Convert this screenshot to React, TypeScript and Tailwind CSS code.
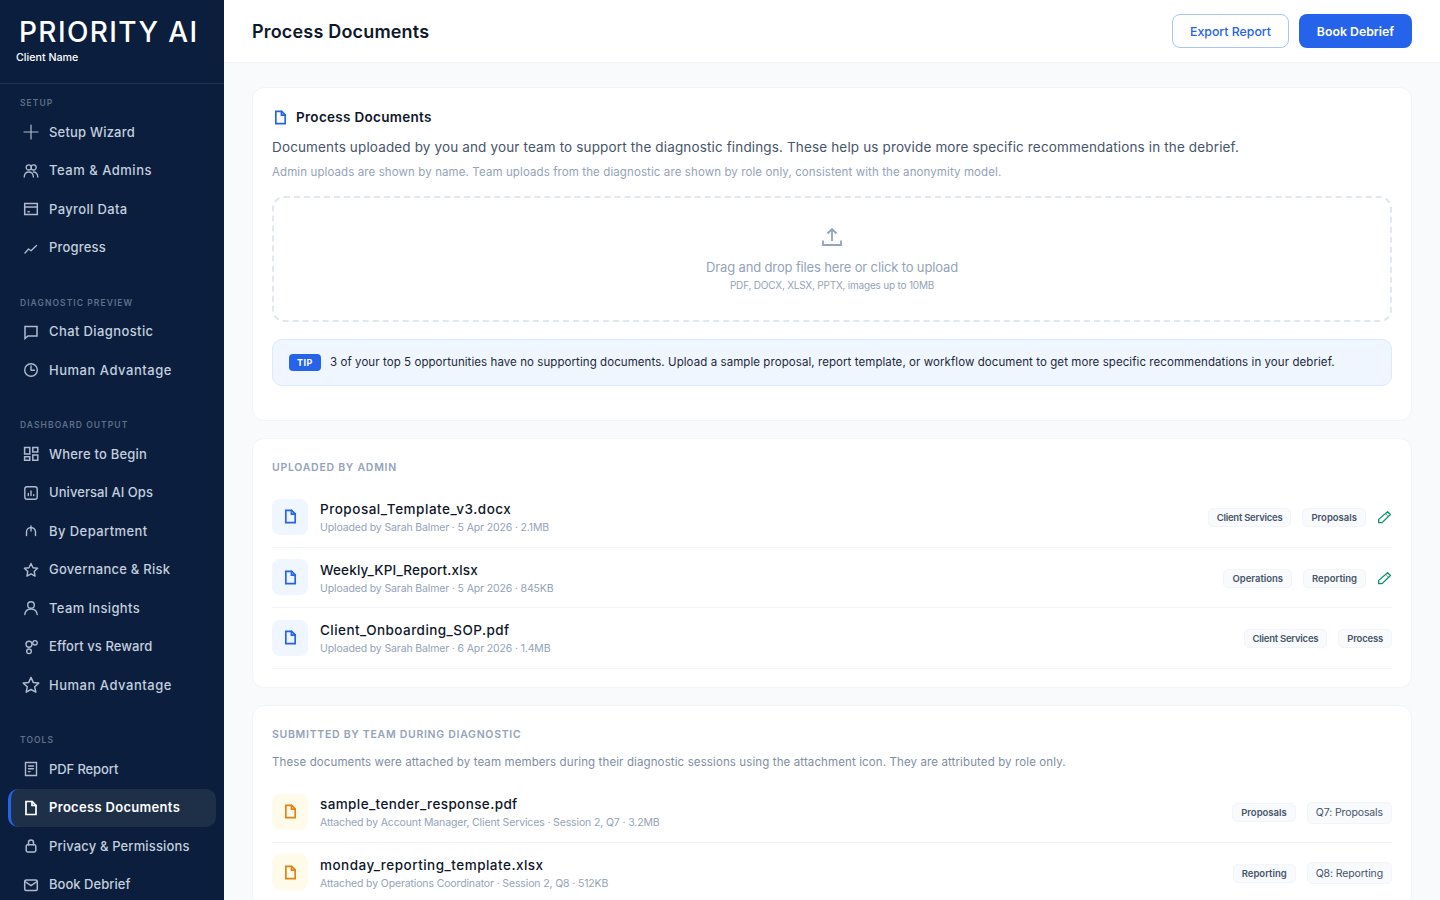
import React from "react";

const S = ({ children, size = 16, vb = 16, sw = 1.4, cls = "" }: { children: React.ReactNode; size?: number; vb?: number; sw?: number; cls?: string }) => (
  <svg width={size} height={size} viewBox={`0 0 ${vb} ${vb}`} fill="none" stroke="currentColor" strokeWidth={sw} strokeLinecap="round" strokeLinejoin="round" className={`shrink-0 ${cls}`}>
    {children}
  </svg>
);

const Doc = ({ size = 16, sw = 1.5, cls = "" }: { size?: number; sw?: number; cls?: string }) => (
  <S size={size} sw={sw} cls={cls}>
    <path strokeLinejoin="miter" d="M3 1.5h6.2L13 5.3v9.2H3z" />
    <path strokeLinejoin="miter" d="M9 1.5v4h4" />
  </S>
);

const icons: Record<string, React.ReactNode> = {
  plus: <S sw={1.2}><path d="M8 1v14M1 8h14" /></S>,
  team: (
    <S sw={1.3}>
      <circle cx="5.8" cy="4.4" r="2.6" />
      <circle cx="10.6" cy="4.4" r="2.6" />
      <path d="M1.2 14c.2-3.2 2-5 4.6-5s4.4 1.8 4.6 5M10.4 9c2.4 0 4.2 1.800 4.400 5" />
    </S>
  ),
  payroll: (
    <S sw={1.5}>
      <path strokeLinejoin="miter" d="M1.700 2.500h12.600v11H1.700zM1.700 6h12.600" />
      <path d="M5 10.700h1.200" />
    </S>
  ),
  progress: <S sw={1.3}><path d="M2 13l3.500-4 2.500 1.800 5.500-5.300" /></S>,
  chat: <S sw={1.5}><path strokeLinejoin="miter" d="M2 2.500h12v9.500H5l-3 2.500z" /></S>,
  clock: (
    <S sw={1.4}>
      <circle cx="8" cy="8" r="6.300" />
      <path d="M8 4v4.200l3.400 0" />
    </S>
  ),
  grid: (
    <S sw={1.5}>
      <path strokeLinejoin="miter" d="M1.600 1.600h5.200v6.400H1.600zM9.800 1.600h5v4.400h-5zM1.600 10.800h5.200v3.400H1.600zM9.800 9h5v5.200h-5z" />
    </S>
  ),
  ops: (
    <S sw={1.4}>
      <rect x="1.800" y="1.800" width="12.400" height="12.400" rx="2.200" />
      <path d="M5.300 8.500v2M8 6v4.500M10.700 9.700v.800" />
    </S>
  ),
  dept: <S sw={1.4}><path d="M3.500 12.500V9a4.500 4.500 0 0 1 9 0v3.500M8 3v5" /></S>,
  star: <S sw={1.4}><path d="M8 1.500l2 4.200 4.600.6-3.400 3.200.9 4.600L8 11.800l-4.100 2.300.9-4.600L1.400 6.300 6 5.700z" /></S>,
  person: (
    <S sw={1.4}>
      <circle cx="8" cy="5" r="3.300" />
      <path d="M1.800 14.500c.4-3.500 2.900-5.500 6.200-5.500s5.800 2 6.200 5.500" />
    </S>
  ),
  effort: (
    <S sw={1.4}>
      <circle cx="6" cy="5.300" r="3" />
      <circle cx="12" cy="3.800" r="2.200" />
      <circle cx="6" cy="12.300" r="2.300" />
    </S>
  ),
  star2: <S size={18} sw={1.3}><path d="M8 1.200l2 4.500 4.900.6-3.600 3.300 1 4.800L8 12l-4.300 2.400 1-4.800L1.100 6.300 6 5.700z" /></S>,
  pdf: (
    <S sw={1.4}>
      <path strokeLinejoin="miter" d="M2.500 1.500h11v13h-11z" />
      <path d="M5.500 5h5M5.500 7.800h5M5.500 10.600h1.500" />
    </S>
  ),
  doc: <Doc sw={1.7} />,
  lock: (
    <S sw={1.5}>
      <rect x="3.200" y="6.800" width="9.600" height="7.200" rx="1.400" />
      <path d="M5.500 6.800V4.500c0-1.500 1.100-2.500 2.500-2.500s2.500 1 2.500 2.500v2.300" />
    </S>
  ),
  mail: (
    <S sw={1.5}>
      <rect x="1.700" y="3" width="12.600" height="10.500" rx="1.500" />
      <path d="M2 4.500l6 4.200 6-4.200" />
    </S>
  ),
};

const nav: { label: string; items: [string, string, string][] }[] = [
  {
    label: "SETUP",
    items: [
      ["plus", "Setup Wizard", "tracking-[0.015em]"],
      ["team", "Team & Admins", "tracking-[0.039em]"],
      ["payroll", "Payroll Data", "tracking-[0.028em]"],
      ["progress", "Progress", "tracking-[0.015em]"],
    ],
  },
  {
    label: "DIAGNOSTIC PREVIEW",
    items: [
      ["chat", "Chat Diagnostic", "tracking-[0.03em]"],
      ["clock", "Human Advantage", "tracking-[0.04em]"],
    ],
  },
  {
    label: "DASHBOARD OUTPUT",
    items: [
      ["grid", "Where to Begin", "tracking-[0.015em]"],
      ["ops", "Universal AI Ops", "tracking-[0.005em]"],
      ["dept", "By Department", "tracking-[0.033em]"],
      ["star", "Governance & Risk", "tracking-[0.02em]"],
      ["person", "Team Insights", "tracking-[0.027em]"],
      ["effort", "Effort vs Reward", "tracking-[0.005em]"],
      ["star2", "Human Advantage", "tracking-[0.04em]"],
    ],
  },
  {
    label: "TOOLS",
    items: [
      ["pdf", "PDF Report", "tracking-[-0.008em]"],
      ["doc", "Process Documents", "tracking-[0.024em]"],
      ["lock", "Privacy & Permissions", "tracking-[0.011em]"],
      ["mail", "Book Debrief", "tracking-[0.002em]"],
    ],
  },
];

const tagTrack: Record<string, string> = {
  "Client Services": "tracking-[-0.025em]",
  Operations: "tracking-[0em]",
  Process: "tracking-[-0.02em]",
  Proposals: "tracking-[0em]",
  Reporting: "tracking-[0em]",
};

const Tag = ({ t }: { t: string }) => (
  <span className={`flex h-[19px] items-center rounded-[5px] border border-[#f1f5f9] bg-[#f8fafc] px-2 pt-[2px] text-[9.5px] font-semibold text-[#475569] ${tagTrack[t]}`}>{t}</span>
);

const Chip = ({ t }: { t: string }) => (
  <span className="flex h-[22px] items-center rounded-[5px] border border-[#f1f5f9] bg-[#f8fafc] px-2 pt-[1px] text-[10.5px] tracking-[-0.01em] text-[#475569]">{t}</span>
);

const Pencil = () => (
  <svg width="15" height="15" viewBox="0 0 16 16" fill="none" stroke="#059669" strokeWidth="1.400" strokeLinejoin="round" className="shrink-0">
    <path d="M11.300 1.800l3 3-8.800 8.700H1.800v-3.500z" />
    <path d="M9.300 3.800l3 3" strokeWidth="0.600" />
  </svg>
);

type RowT = { name: string; track: string; sub: string; tags: string[]; pencil?: boolean; chip?: string };

const Row = ({ r, amber }: { r: RowT; amber?: boolean }) => (
  <div className="flex h-[60.5px] items-center border-b border-[#f1f5f9]">
    <div className={`flex h-9 w-9 items-center justify-center rounded-lg ${amber ? "bg-[#fffbeb] text-[#e08312]" : "bg-[#eff6ff] text-[#2563eb]"}`}>
      <Doc size={15} sw={1.8} />
    </div>
    <div className="ml-3 flex flex-col gap-[2px] pt-[3px]">
      <div className={`h-[18px] text-[13.5px] leading-[18px] font-medium text-[#0f172a] ${r.track}`}>{r.name}</div>
      <div className="h-4 text-[10.5px] leading-4 tracking-[-0.013em] text-[#94a3b8]">{r.sub}</div>
    </div>
    <div className="ml-auto flex items-center gap-[11px] pt-[1.5px]">
      {r.tags.map((t) => <Tag key={t} t={t} />)}
      {r.chip && <Chip t={r.chip} />}
      {r.pencil && <Pencil />}
    </div>
  </div>
);

const admin: RowT[] = [
  { name: "Proposal_Template_v3.docx", track: "tracking-[0.0386em]", sub: "Uploaded by Sarah Balmer · 5 Apr 2026 · 2.1MB", tags: ["Client Services", "Proposals"], pencil: true },
  { name: "Weekly_KPI_Report.xlsx", track: "tracking-[0.012em]", sub: "Uploaded by Sarah Balmer · 5 Apr 2026 · 845KB", tags: ["Operations", "Reporting"], pencil: true },
  { name: "Client_Onboarding_SOP.pdf", track: "tracking-[0.033em]", sub: "Uploaded by Sarah Balmer · 6 Apr 2026 · 1.4MB", tags: ["Client Services", "Process"] },
];

const team: RowT[] = [
  { name: "sample_tender_response.pdf", track: "tracking-[0.029em]", sub: "Attached by Account Manager, Client Services · Session 2, Q7 · 3.2MB", tags: ["Proposals"], chip: "Q7: Proposals" },
  { name: "monday_reporting_template.xlsx", track: "tracking-[0.036em]", sub: "Attached by Operations Coordinator · Session 2, Q8 · 512KB", tags: ["Reporting"], chip: "Q8: Reporting" },
];

export default function App() {
  return (
    <div className="flex h-screen overflow-hidden bg-[#f8fafc] font-[Inter,sans-serif]">
      <aside className="flex w-56 shrink-0 flex-col overflow-hidden bg-[#0c1e3d]">
        <div className="h-[84px] shrink-0 border-b border-[#1f3350] pt-[14px] pl-4">
          <div className="ml-[3px] h-[37px] text-[28px] leading-[37px] font-medium tracking-[0.05em] whitespace-nowrap text-white">PRIORITY AI</div>
          <div className="text-[10.7px] leading-[14px] font-medium text-white">Client Name</div>
        </div>
        <nav className="pt-3">
          {nav.map((sec, i) => (
            <div key={sec.label} className={i ? "mt-[28.5px]" : ""}>
              <div className="mb-[3px] h-3.5 pl-5 text-[8.5px] leading-[14px] font-semibold tracking-[0.125em] text-[#5d6f8a]">{sec.label}</div>
              {sec.items.map(([ic, t, tr]) => {
                const active = t === "Process Documents";
                return (
                  <div key={ic + t} className={`mx-2 flex h-[38.5px] items-center gap-2.5 border-l-[3px] pl-3 ${active ? "rounded-[10px] border-[#2563eb] bg-[#1e3048] font-semibold text-white" : "border-transparent font-medium text-[#c3cfdf]"}`}>
                    <span className={`flex w-4 justify-center ${active ? "text-white" : "text-[#aebbcf]"}`}>{icons[ic]}</span>
                    <span className={`text-[13px] whitespace-nowrap ${tr}`}>{t}</span>
                  </div>
                );
              })}
            </div>
          ))}
        </nav>
      </aside>
      <main className="flex min-w-0 flex-1 flex-col overflow-hidden">
        <header className="flex h-[63px] shrink-0 items-center border-b border-[#f1f5f9] bg-white px-7">
          <h1 className="pt-[2px] text-lg font-semibold tracking-[0.01em] text-[#0f172a]">Process Documents</h1>
          <div className="ml-auto flex items-center gap-2.5 pb-[1px]">
            <button className="flex h-[34px] w-[117px] items-center justify-center rounded-lg border-[1.5px] border-[#a9c4f8] bg-white pt-[3px] text-[12.3px] font-medium text-[#2563eb]">Export Report</button>
            <button className="flex h-[34px] w-[113px] items-center justify-center rounded-lg bg-[#2563eb] pt-[3px] text-[12.3px] font-semibold text-white">Book Debrief</button>
          </div>
        </header>
        <div className="flex flex-col gap-[17px] px-7 pt-6">
          <section className="shrink-0 rounded-xl border border-[#f1f5f9] bg-white px-[19px] pt-[19px] pb-[34px]">
            <div className="flex h-5 items-center">
              <span className="ml-[1px] text-[#2563eb]"><Doc size={15} sw={1.8} /></span>
              <span className="ml-2 text-[13.5px] font-semibold tracking-[0.022em] text-[#0f172a]">Process Documents</span>
            </div>
            <p className="mt-2.5 h-5 text-[13.5px] leading-5 tracking-[0.0107em] whitespace-nowrap text-[#475569]">Documents uploaded by you and your team to support the diagnostic findings. These help us provide more specific recommendations in the debrief.</p>
            <p className="mt-1.5 h-[18px] text-[11.5px] leading-[18px] tracking-[0.009em] whitespace-nowrap text-[#94a3b8]">Admin uploads are shown by name. Team uploads from the diagnostic are shown by role only, consistent with the anonymity model.</p>
            <div className="mt-[15px] flex h-[126px] flex-col items-center rounded-xl border-2 border-dashed border-[#e2e8f0] pt-[29px]">
              <svg width="22" height="20" viewBox="0 0 22 20" fill="none" stroke="#94a3b8" strokeWidth="1.800">
                <path d="M11 14V2M6.500 6.500L11 2l4.500 4.500" />
                <path d="M2 13.500V18h18v-4.500" />
              </svg>
              <div className="mt-[11px] h-[18px] text-[13px] leading-[18px] tracking-[-0.011em] text-[#94a3b8]">Drag and drop files here or click to upload</div>
              <div className="mt-[1px] text-[10px] leading-4 tracking-[-0.02em] text-[#94a3b8]">PDF, DOCX, XLSX, PPTX, images up to 10MB</div>
            </div>
            <div className="mt-[17px] flex h-[47px] items-center rounded-[10px] border border-[#dbeafe] bg-[#eff6ff] pl-4">
              <span className="flex h-[17px] w-8 items-center justify-center rounded-[4px] bg-[#2563eb] text-[9px] font-bold tracking-[0.06em] text-white">TIP</span>
              <span className="ml-[9px] text-[11.5px] tracking-[0.0063em] whitespace-nowrap text-[#1e293b]">3 of your top 5 opportunities have no supporting documents. Upload a sample proposal, report template, or workflow document to get more specific recommendations in your debrief.</span>
            </div>
          </section>
          <section className="shrink-0 rounded-xl border border-[#f1f5f9] bg-white px-[19px] pt-[22px] pb-[18.5px]">
            <div className="h-3.5 text-[10.5px] leading-[14px] font-semibold tracking-[0.07em] text-[#94a3b8]">UPLOADED BY ADMIN</div>
            <div className="mt-3">{admin.map((r) => <Row key={r.name} r={r} />)}</div>
          </section>
          <section className="shrink-0 rounded-xl border border-[#f1f5f9] bg-white px-[19px] pt-[22px] pb-5">
            <div className="h-3.5 text-[10.5px] leading-[14px] font-semibold tracking-[0.068em] text-[#94a3b8]">SUBMITTED BY TEAM DURING DIAGNOSTIC</div>
            <p className="mt-[11px] h-[18px] text-[11.5px] leading-[18px] tracking-[0.01em] whitespace-nowrap text-[#7f8ea3]">These documents were attached by team members during their diagnostic sessions using the attachment icon. They are attributed by role only.</p>
            <div className="mt-[11px]">{team.map((r) => <Row key={r.name} r={r} amber />)}</div>
          </section>
        </div>
      </main>
    </div>
  );
}
